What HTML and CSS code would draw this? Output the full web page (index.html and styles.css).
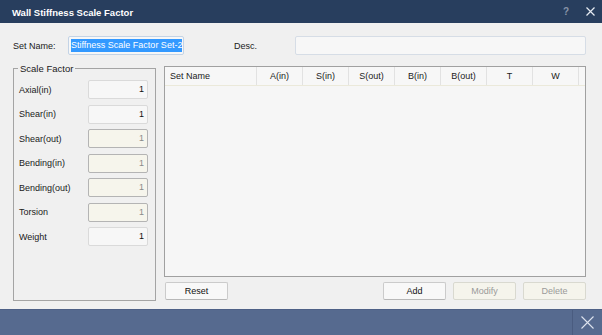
FILE: index.html
```html
<!DOCTYPE html>
<html lang="en">
<head>
<meta charset="UTF-8">
<title>Wall Stiffness Scale Factor</title>
<link rel="stylesheet" href="styles.css">
</head>
<body>
<div class="titlebar">
  <div class="title">Wall Stiffness Scale Factor</div>
  <span class="help">?</span>
  <svg class="title-close" width="9" height="9" viewBox="0 0 9 9">
    <path d="M0.5 0.5 L8.5 8.5 M8.5 0.5 L0.5 8.5" stroke="#e6ebf2" stroke-width="1.2" fill="none"/>
  </svg>
</div>

<div class="dialog">
  <div class="name-row">
    <label class="name-label">Set Name:</label>
    <div class="field name-field"><span class="sel">Stiffness Scale Factor Set-2</span></div>
    <label class="desc-label">Desc.</label>
    <div class="field desc-field"></div>
  </div>

  <div class="main">
    <div class="group">
      <div class="group-title">Scale Factor</div>
      <div class="rows">
        <div class="row"><span>Axial(in)</span><div class="num">1</div></div>
        <div class="row"><span>Shear(in)</span><div class="num">1</div></div>
        <div class="row"><span>Shear(out)</span><div class="num off">1</div></div>
        <div class="row"><span>Bending(in)</span><div class="num off">1</div></div>
        <div class="row"><span>Bending(out)</span><div class="num off">1</div></div>
        <div class="row"><span>Torsion</span><div class="num off">1</div></div>
        <div class="row"><span>Weight</span><div class="num">1</div></div>
      </div>
    </div>

    <div class="list-area">
      <div class="table">
        <div class="table-head">
          <div class="th first">Set Name</div>
          <div class="th">A(in)</div>
          <div class="th">S(in)</div>
          <div class="th">S(out)</div>
          <div class="th">B(in)</div>
          <div class="th">B(out)</div>
          <div class="th">T</div>
          <div class="th">W</div>
          <div class="th last"></div>
        </div>
      </div>
      <div class="buttons">
        <button class="btn">Reset</button>
        <div class="spacer"></div>
        <button class="btn">Add</button>
        <button class="btn" disabled>Modify</button>
        <button class="btn" disabled>Delete</button>
      </div>
    </div>
  </div>
</div>

<div class="statusbar">
  <div class="status-close">
    <svg width="13" height="13" viewBox="0 0 13 13">
      <path d="M0.5 0.5 L12.5 12.5 M12.5 0.5 L0.5 12.5" stroke="#dde3ee" stroke-width="1.1" fill="none"/>
    </svg>
  </div>
</div>
</body>
</html>
```

FILE: styles.css
```css
body {
  margin: 0;
  width: 602px;
  height: 335px;
  display: flex;
  flex-direction: column;
  background-color: #f0f0f0;
  font-family: "Liberation Sans", Arial, sans-serif;
  font-size: 9px;
  color: #1a1a1a;
  overflow: hidden;
}
.titlebar {
  height: 23px;
  flex: none;
  display: flex;
  align-items: center;
  background-color: #283e5e;
  padding-left: 12px;
}
.title {
  flex: 1;
  color: #ffffff;
  font-weight: bold;
  font-size: 9.5px;
  padding-top: 2px;
}
.help {
  color: #8794a8;
  font-size: 10px;
  font-weight: bold;
}
.title-close {
  margin-left: 17px;
  margin-right: 7px;
}
.dialog {
  flex: 1;
  display: flex;
  flex-direction: column;
  padding: 13px 16px 0 13px;
}
.name-row {
  display: flex;
  align-items: center;
  height: 19px;
}
.name-label {
  width: 55px;
}
.desc-label {
  margin-left: 50px;
  width: 61px;
}
.field {
  box-sizing: border-box;
  height: 19px;
  border: 1px solid #d6dde6;
  border-radius: 2px;
  background-color: #f7f7f7;
  display: flex;
  align-items: center;
}
.name-field {
  width: 116px;
  padding-left: 2px;
  border-color: #c3d3e6;
}
.desc-field {
  flex: 1;
}
.sel {
  background-color: #3399ff;
  color: #ffffff;
  line-height: 13px;
  white-space: nowrap;
}
.main {
  display: flex;
  margin-top: 11px;
}
.group {
  box-sizing: border-box;
  width: 143px;
  height: 233px;
  margin-top: 2px;
  border: 1px solid #a4a4a4;
  padding: 0 7px 0 5px;
}
.group-title {
  width: fit-content;
  margin: -7px 0 0 -1px;
  padding: 0 2px;
  line-height: 13px;
  background-color: #f0f0f0;
  font-size: 9.5px;
}
.rows {
  display: flex;
  flex-direction: column;
  gap: 5.5px;
  margin-top: 5px;
}
.row {
  display: flex;
  justify-content: space-between;
  align-items: center;
  height: 19px;
}
.num {
  box-sizing: border-box;
  width: 60px;
  height: 19px;
  line-height: 17px;
  border: 1px solid #dadada;
  border-radius: 2px;
  background-color: #f7f7f7;
  text-align: right;
  padding-right: 3px;
  color: #111;
}
.num.off {
  background-color: #f6f5ec;
  border-color: #b4b4b4;
  color: #8a8a8a;
}
.list-area {
  flex: 1;
  display: flex;
  flex-direction: column;
  margin-left: 8px;
}
.table {
  box-sizing: border-box;
  height: 211px;
  border: 1px solid #a0a0a0;
  background-color: #f6f6f6;
}
.table-head {
  display: grid;
  grid-template-columns: 92px repeat(7, 46px) 1fr;
  height: 18px;
  background-color: #f7f7f7;
  border-bottom: 1px solid #ebe9da;
}
.th {
  border-right: 1px solid #e2e2e2;
  text-align: center;
  line-height: 18px;
  color: #222;
}
.th.first {
  text-align: left;
  padding-left: 5px;
}
.th.last {
  border-right: none;
}
.buttons {
  display: flex;
  gap: 7px;
  margin-top: 5px;
}
.spacer {
  flex: 1;
}
.btn {
  box-sizing: border-box;
  width: 63px;
  height: 18px;
  margin: 0;
  padding: 0;
  border: 1px solid #cbcbcb;
  border-bottom-color: #b8b8b8;
  border-radius: 2px;
  background-color: #f8f8f8;
  font-family: "Liberation Sans", Arial, sans-serif;
  font-size: 9px;
  color: #111;
}
.btn:first-child {
  margin-left: 1px;
}
.btn:disabled {
  background-color: #f5f4ec;
  border-color: #d9d9d0;
  color: #9a9a9a;
}
.statusbar {
  height: 26px;
  flex: none;
  box-sizing: border-box;
  display: flex;
  justify-content: flex-end;
  background-color: #566a8f;
  border-top: 1px solid #4d6086;
}
.status-close {
  width: 29px;
  border-left: 1px solid #4a5c80;
  display: flex;
  align-items: center;
  justify-content: center;
}
```
